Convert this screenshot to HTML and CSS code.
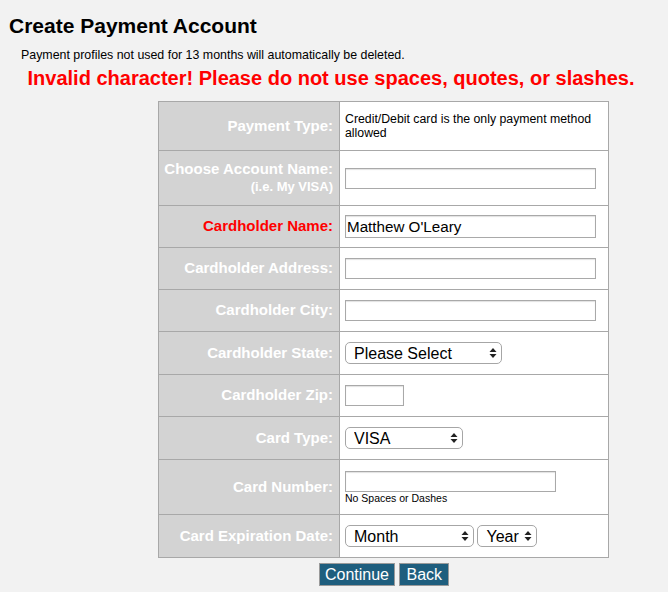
FILE: index.html
```html
<!DOCTYPE html>
<html>
<head>
<meta charset="utf-8">
<link rel="stylesheet" href="styles.css">
</head>
<body>
<h1 class="title">Create Payment Account</h1>
<p class="note">Payment profiles not used for 13 months will automatically be deleted.</p>
<p class="error">Invalid character! Please do not use spaces, quotes, or slashes.</p>
<div class="formwrap">
<table class="form">
<tr class="r1"><th>Payment Type:</th><td class="info">Credit/Debit card is the only payment method allowed</td></tr>
<tr class="r2"><th>Choose Account Name:<br><span class="sub">(i.e. My VISA)</span></th><td><input class="txt wide" type="text"></td></tr>
<tr class="r3"><th class="bad">Cardholder Name:</th><td><input class="txt wide big" type="text" value="Matthew O'Leary"></td></tr>
<tr class="r3"><th>Cardholder Address:</th><td><input class="txt wide" type="text"></td></tr>
<tr class="r3"><th>Cardholder City:</th><td><input class="txt wide" type="text"></td></tr>
<tr class="r4"><th>Cardholder State:</th><td><span class="sel w-state"><select><option>Please Select</option></select><svg class="arr" viewBox="0 0 8 12" width="8" height="12"><path d="M4 1 L7.5 5 H0.5 Z M4 11 L7.5 7 H0.5 Z" fill="#222"/></svg></span></td></tr>
<tr class="r3"><th>Cardholder Zip:</th><td><input class="txt zip" type="text"></td></tr>
<tr class="r4"><th>Card Type:</th><td><span class="sel w-type"><select><option>VISA</option></select><svg class="arr" viewBox="0 0 8 12" width="8" height="12"><path d="M4 1 L7.5 5 H0.5 Z M4 11 L7.5 7 H0.5 Z" fill="#222"/></svg></span></td></tr>
<tr class="r2"><th>Card Number:</th><td><input class="txt card" type="text"><div class="hint">No Spaces or Dashes</div></td></tr>
<tr class="r4"><th>Card Expiration Date:</th><td><span class="sel w-month"><select><option>Month</option></select><svg class="arr" viewBox="0 0 8 12" width="8" height="12"><path d="M4 1 L7.5 5 H0.5 Z M4 11 L7.5 7 H0.5 Z" fill="#222"/></svg></span> <span class="sel w-year"><select><option>Year</option></select><svg class="arr" viewBox="0 0 8 12" width="8" height="12"><path d="M4 1 L7.5 5 H0.5 Z M4 11 L7.5 7 H0.5 Z" fill="#222"/></svg></span></td></tr>
</table>
<div class="actions"><button class="btn cont">Continue</button> <button class="btn">Back</button></div>
</div>
</body>
</html>
```
FILE: styles.css
```css
html, body {
  margin: 0;
  padding: 0;
  background: #f2f2f2;
  font-family: "Liberation Sans", Arial, sans-serif;
  color: #000;
}
.title {
  margin: 13px 0 0 9px;
  font-size: 21px;
  line-height: 25px;
  font-weight: bold;
}
.note {
  margin: 10px 0 0 21px;
  font-size: 12.4px;
  line-height: 14px;
}
.error {
  margin: 5px 0 0 0;
  text-align: center;
  color: #f00;
  font-size: 20px;
  line-height: 23px;
  font-weight: bold;
  padding-right: 6px;
}
.formwrap {
  margin: 11px 0 0 158px;
  width: 451px;
}
.form {
  border-collapse: collapse;
  width: 451px;
  background: #fff;
  border: 1px solid #a8a8a8;
}
.form th, .form td {
  border: 1px solid #a8a8a8;
  padding: 0;
  vertical-align: middle;
}
.form th {
  width: 174px;
  background: #d3d3d3;
  color: #fff;
  text-align: right;
  font-size: 15px;
  line-height: 17px;
  font-weight: bold;
  padding-right: 6px;
  padding-bottom: 2px;
  white-space: nowrap;
}
.form th.bad { color: #f00; }
.form th .sub { font-size: 13px; line-height: 16px; }
.form td {
  padding-left: 5px;
  font-size: 12.3px;
  line-height: 14px;
}
.r1 td { height: 48px; }
.r2 td { height: 54px; }
.r3 td { height: 41px; }
.r4 td { height: 42px; }
.r1 th { height: 46px; }
.r2 th { height: 52px; }
.r3 th { height: 39px; }
.r4 th { height: 40px; }
.info { padding-top: 2px; }
.txt {
  display: block;
  box-sizing: border-box;
  height: 21px;
  margin: 0;
  border: 1px solid #a9a9a9;
  box-shadow: inset 0 1px 1px #e2e2e2;
  background: #fff;
  font-family: "Liberation Sans", Arial, sans-serif;
  font-size: 13px;
  padding: 0 1px;
}
.wide { width: 251px; }
.big { height: 23px; font-size: 15.2px; color: #000; }
.zip { width: 59px; }
.card { width: 211px; margin-top: 1px; }
.hint { font-size: 10.5px; line-height: 13px; margin-top: 0; }
.sel {
  position: relative;
  display: inline-block;
  vertical-align: middle;
}
.sel select {
  -webkit-appearance: none;
  appearance: none;
  box-sizing: border-box;
  height: 22px;
  width: 100%;
  border: 1px solid #a6a6a6;
  border-radius: 5px;
  background: #fff;
  font-family: "Liberation Sans", Arial, sans-serif;
  font-size: 16px;
  color: #000;
  padding: 0 0 0 8px;
  margin: 0;
  display: block;
}
.sel .arr {
  position: absolute;
  right: 5px;
  top: 5px;
}
.w-state { width: 157px; }
.w-type { width: 118px; }
.w-month { width: 129px; }
.w-year { width: 60px; }
.actions {
  text-align: center;
  margin-top: 5px;
  padding-left: 1px;
}
.btn {
  box-sizing: border-box;
  height: 23px;
  margin: 0;
  padding: 0 6px;
  background: #1e5e7e;
  color: #fff;
  border: 1px solid #9a9a9a;
  border-radius: 0;
  font-family: "Liberation Sans", Arial, sans-serif;
  font-size: 16px;
  line-height: 20px;
}
.btn.cont { padding: 0 5px; }
```
